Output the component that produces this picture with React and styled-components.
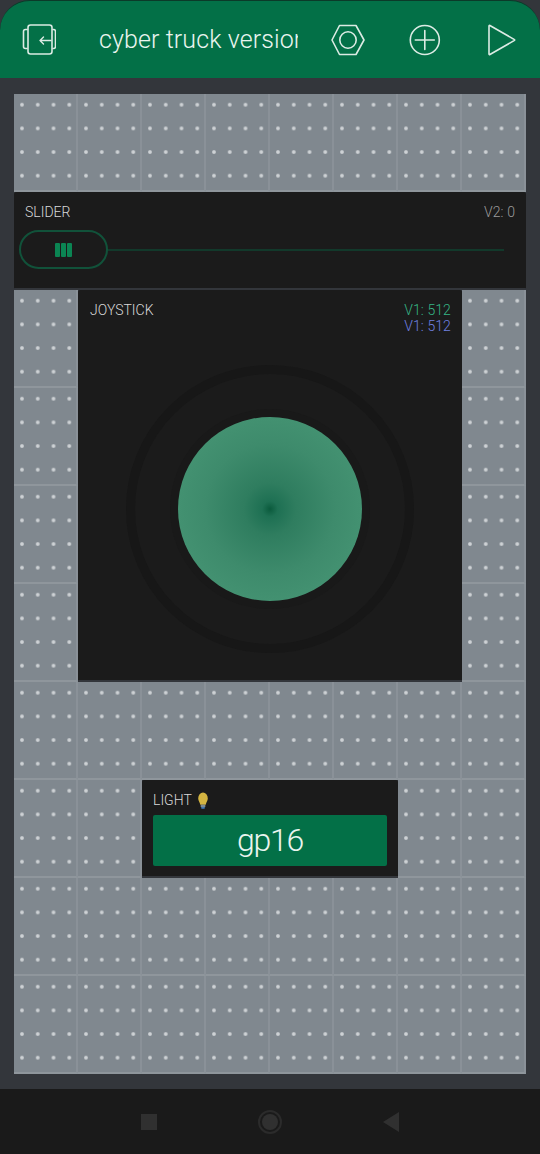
import React from 'react';
import styled, { createGlobalStyle } from 'styled-components';

const Global = createGlobalStyle`
  html, body { margin: 0; padding: 0; background: #000; }
  body { width: 540px; height: 1154px; overflow: hidden; font-family: Roboto, "Liberation Sans", sans-serif; }
  * { box-sizing: border-box; }
`;

const Screen = styled.div`
  width: 540px; height: 1154px; display: flex; flex-direction: column; background: #33363b;
`;
const TopBar = styled.header`
  height: 78px; flex: none; background: #037047; border-radius: 30px 30px 0 0;
  border-top: 1px solid #0b3a29;
  display: flex; align-items: center; padding: 0 24px 0 22px;
`;
const IconSlot = styled.div`
  flex: none; display: flex; margin-left: ${p => p.$ml || 0}px;
  svg { display: block; }
`;
const Title = styled.div`
  width: 200px; margin-left: 43px; overflow: hidden; white-space: nowrap;
  color: #eaf5ef; font-size: 25px; font-weight: 300; letter-spacing: 0.1px;
`;
const Canvas = styled.main`
  flex: 1; padding: 16px 14px 15px;
`;
const Board = styled.div`
  width: 512px; height: 980px; display: grid;
  grid-template-columns: repeat(8, 64px); grid-template-rows: repeat(10, 98px);
`;
const Cell = styled.div`
  background-color: #80888f;
  border-right: 2px solid #8a9198;
  border-bottom: 2px solid #8f969c;
  background-image: radial-gradient(circle, #ced2d5 0 1.3px, transparent 2.4px);
  background-size: 15.78px 23.67px;
  background-position: 0.1px -1.1px;
`;
const Widget = styled.section`
  grid-column: ${p => p.$col}; grid-row: ${p => p.$row};
  background: #1b1b1b; position: relative; color: #d8d8d8;
  border-bottom: 2px solid #33363b;
  border-radius: 2px; padding: ${p => p.$pad || '0'};
  display: flex; flex-direction: column;
`;
const WidgetHead = styled.div`
  display: flex; justify-content: space-between; align-items: flex-start;
  padding-left: ${p => p.$indent || 0}px;
  font-size: 14px; font-weight: 300; line-height: 16px;
`;
const Pin = styled.div`
  color: ${p => p.$color}; text-align: right; font-size: 14px; line-height: 16px; font-weight: 300;
  letter-spacing: 0.1px;
`;
const SliderRow = styled.div`
  display: flex; align-items: center; margin: 10px 0 0 -6px;
`;
const Thumb = styled.div`
  width: 89px; height: 39px; flex: none; border: 2px solid #11523a; border-radius: 20px;
  display: flex; justify-content: center; align-items: center; gap: 1.5px;
`;
const Grip = styled.span`
  width: 4.5px; height: 14px; border-radius: 1px; background: #0b8553;
`;
const Track = styled.div`
  flex: 1; height: 2px; background: #12392b; margin-right: 11px;
`;
const JoyArea = styled.div`
  flex: 1; display: flex; align-items: center; justify-content: center;
`;
const JoyRing = styled.div`
  width: 288px; height: 288px; border-radius: 50%; margin-top: 4px; flex: none;
  background: #1b1b1b; border: 9px solid #171717;
  display: flex; align-items: center; justify-content: center;
`;
const JoyKnob = styled.div`
  width: 184px; height: 184px; border-radius: 50%;
  background: radial-gradient(circle, #0a5a3c 0, #1e7053 6%, #2f7d5f 20%, #3e8b6c 50%, #4a9a78 100%);
  box-shadow: 0 0 0 8px #191919;
`;
const LightLabel = styled.div`
  font-size: 14px; line-height: 18px; font-weight: 300; display: flex; align-items: center; gap: 5px;
`;
const LightButton = styled.div`
  margin-top: 6px; height: 51px; background: #037047; border-radius: 2px; color: #eaf5ef;
  display: flex; align-items: center; justify-content: center;
  font-size: 32px; font-weight: 300; letter-spacing: -1.2px; padding-bottom: 1px;
`;
const NavBar = styled.footer`
  height: 65px; flex: none; background: #1a1a1a; display: flex; align-items: center; justify-content: center;
  gap: 101px;
  svg { display: block; }
`;

const stroke = { fill: 'none', stroke: '#dcebe4', strokeWidth: 1.6, strokeLinecap: 'round', strokeLinejoin: 'round' };

const ExitIcon = () => (
  <svg width="34" height="32" viewBox="0 0 34 32" {...stroke}>
    <rect x="6" y="1" width="24" height="29" rx="2.5" />
    <path d="M5 5.500H3.500a2 2 0 0 0-2 2v15a2 2 0 0 0 2 2H5M31 5.500h.5a2 2 0 0 1 2 2v15a2 2 0 0 1-2 2H31" />
    <path d="M29 16.500H18M21.500 13 18 16.500l3.500 3.500" strokeWidth="1.4" />
  </svg>
);
const NutIcon = () => (
  <svg width="34" height="32" viewBox="0 0 34 32" {...stroke}>
    <path d="M8.500 1.500h16.500L33 16l-8 14.500H8.500L1 16z" />
    <circle cx="17" cy="16" r="8.200" />
  </svg>
);
const PlusIcon = () => (
  <svg width="32" height="32" viewBox="0 0 32 32" {...stroke}>
    <circle cx="15.800" cy="16" r="14.500" />
    <path d="M15.800 6.500v19M6.300 16h19" />
  </svg>
);
const PlayIcon = () => (
  <svg width="28" height="32" viewBox="0 0 28 32" {...stroke}>
    <path d="M1 2v28a.6.6 0 0 0 .9.5L26.500 16.400a.5.5 0 0 0 0-.8L1.900 1.500a.6.6 0 0 0-.9.5z" />
  </svg>
);
const Bulb = () => (
  <svg width="12" height="17" viewBox="0 0 15 18" preserveAspectRatio="none">
    <path d="M7.500.5a6.200 6.200 0 0 0-6 6.300c0 2.600 2 3.600 2.600 6.700h6.800c.6-3.100 2.600-4.100 2.600-6.700a6.200 6.200 0 0 0-6-6.300z" fill="#d3b441" />
    <rect x="4.500" y="13.500" width="6" height="2.600" rx="1" fill="#7d8a92" />
    <rect x="5.200" y="16" width="4.600" height="1.700" rx=".8" fill="#3f79b8" />
  </svg>
);
const NavSquare = () => (
  <svg width="16" height="16" viewBox="0 0 16 16"><rect width="16" height="16" fill="#303030" /></svg>
);
const NavCircle = () => (
  <svg width="24" height="24" viewBox="0 0 24 24">
    <circle cx="12" cy="12" r="11" fill="none" stroke="#2b2b2b" strokeWidth="2" />
    <circle cx="12" cy="12" r="8" fill="#303030" />
  </svg>
);
const NavBack = () => (
  <svg width="16" height="20" viewBox="0 0 16 20"><path d="M16 0v20L0 10z" fill="#303030" /></svg>
);

export default function App() {
  return (
    <Screen>
      <Global />
      <TopBar>
        <IconSlot><ExitIcon /></IconSlot>
        <Title>cyber truck version</Title>
        <IconSlot $ml={33}><NutIcon /></IconSlot>
        <IconSlot $ml={44}><PlusIcon /></IconSlot>
        <IconSlot $ml={47}><PlayIcon /></IconSlot>
      </TopBar>
      <Canvas>
        <Board>
          <Widget $col="1 / 9" $row="2" $pad="12px 11px 0 11px">
            <WidgetHead>
              <span>SLIDER</span>
              <Pin $color="#9a9a9a">V2: 0</Pin>
            </WidgetHead>
            <SliderRow>
              <Thumb><Grip /><Grip /><Grip /></Thumb>
              <Track />
            </SliderRow>
          </Widget>
          <Widget $col="2 / 8" $row="3 / 7" $pad="12px 11px 0">
            <WidgetHead $indent={1}>
              <span>JOYSTICK</span>
              <div>
                <Pin $color="#35b585">V1: 512</Pin>
                <Pin $color="#7080e0">V1: 512</Pin>
              </div>
            </WidgetHead>
            <JoyArea>
              <JoyRing><JoyKnob /></JoyRing>
            </JoyArea>
          </Widget>
          <Widget $col="3 / 7" $row="8" $pad="11px 11px 0">
            <LightLabel>LIGHT<Bulb /></LightLabel>
            <LightButton>gp16</LightButton>
          </Widget>
          {Array.from({ length: 44 }, (_, i) => <Cell key={i} />)}
        </Board>
      </Canvas>
      <NavBar>
        <NavSquare />
        <NavCircle />
        <NavBack />
      </NavBar>
    </Screen>
  );
}
